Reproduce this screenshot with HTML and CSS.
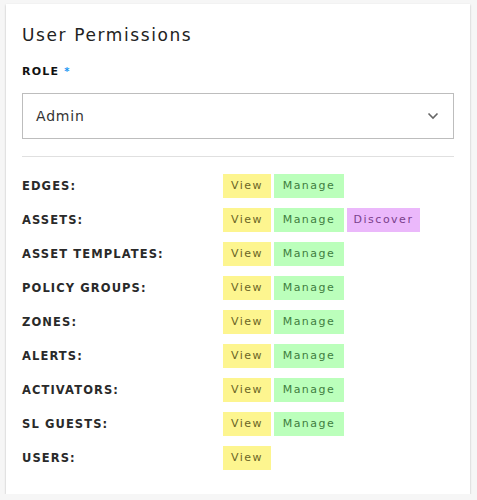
FILE: index.html
```html
<!DOCTYPE html>
<html>
<head>
<meta charset="utf-8">
<link rel="stylesheet" href="styles.css">
</head>
<body>
<div class="card">
  <h2 class="title">User Permissions</h2>
  <div class="field-label">ROLE <span class="req">*</span></div>
  <div class="select">
    <span class="select-value">Admin</span>
    <svg class="chevron" width="12" height="8" viewBox="0 0 12 8"><path d="M1.5 1.5 L6 6 L10.5 1.5" fill="none" stroke="#666" stroke-width="1.6"/></svg>
  </div>
  <div class="divider"></div>
  <div class="perms">
    <div class="row"><span class="label">EDGES:</span><span class="badges"><span class="badge view">View</span><span class="badge manage">Manage</span></span></div>
    <div class="row"><span class="label">ASSETS:</span><span class="badges"><span class="badge view">View</span><span class="badge manage">Manage</span><span class="badge discover">Discover</span></span></div>
    <div class="row"><span class="label">ASSET TEMPLATES:</span><span class="badges"><span class="badge view">View</span><span class="badge manage">Manage</span></span></div>
    <div class="row"><span class="label">POLICY GROUPS:</span><span class="badges"><span class="badge view">View</span><span class="badge manage">Manage</span></span></div>
    <div class="row"><span class="label">ZONES:</span><span class="badges"><span class="badge view">View</span><span class="badge manage">Manage</span></span></div>
    <div class="row"><span class="label">ALERTS:</span><span class="badges"><span class="badge view">View</span><span class="badge manage">Manage</span></span></div>
    <div class="row"><span class="label">ACTIVATORS:</span><span class="badges"><span class="badge view">View</span><span class="badge manage">Manage</span></span></div>
    <div class="row"><span class="label">SL GUESTS:</span><span class="badges"><span class="badge view">View</span><span class="badge manage">Manage</span></span></div>
    <div class="row"><span class="label">USERS:</span><span class="badges"><span class="badge view">View</span></span></div>
  </div>
</div>
</body>
</html>
```
FILE: styles.css
```css
html, body {
  margin: 0;
  padding: 0;
  background: #f6f6f6;
}
body {
  padding: 4px 7px 0 6px;
  font-family: "DejaVu Sans", "Noto Sans", sans-serif;
  color: #222;
}
.card {
  background: #fff;
  box-shadow: 0 1px 2px rgba(0,0,0,0.25);
  padding: 19px 16px 20px 16px;
  height: 451px;
}
.title {
  margin: 0;
  font-size: 17px;
  font-weight: 400;
  letter-spacing: 1.6px;
  line-height: 24px;
  color: #222;
}
.field-label {
  margin-top: 18px;
  font-size: 11px;
  font-weight: 700;
  letter-spacing: 1.2px;
  line-height: 14px;
  color: #111;
}
.req {
  color: #2196f3;
  font-size: 10px;
  vertical-align: top;
}
.select {
  margin-top: 14px;
  height: 44px;
  border: 1px solid #bdbdbd;
  display: flex;
  align-items: center;
  justify-content: space-between;
  padding: 0 14px 0 13px;
}
.select-value {
  font-size: 14px;
  letter-spacing: 0.8px;
  color: #333;
}
.divider {
  margin-top: 17px;
  height: 1px;
  background: #e0e0e0;
}
.perms {
  margin-top: 17px;
  display: flex;
  flex-direction: column;
  gap: 10px;
}
.row {
  display: flex;
  align-items: center;
  height: 24px;
}
.label {
  width: 201px;
  font-size: 11.5px;
  font-weight: 700;
  letter-spacing: 1.1px;
  color: #2a2a2a;
}
.badges {
  display: flex;
  gap: 3px;
}
.badge {
  height: 24px;
  line-height: 23px;
  font-size: 11px;
  letter-spacing: 1.5px;
  text-align: center;
  box-sizing: border-box;
}
.view {
  width: 48px;
  background: #fdf58f;
  color: #6b6526;
}
.manage {
  width: 70px;
  background: #bbffbb;
  color: #3f7d3f;
}
.discover {
  width: 73px;
  background: #ebb8fb;
  color: #7a3f8c;
}
```
